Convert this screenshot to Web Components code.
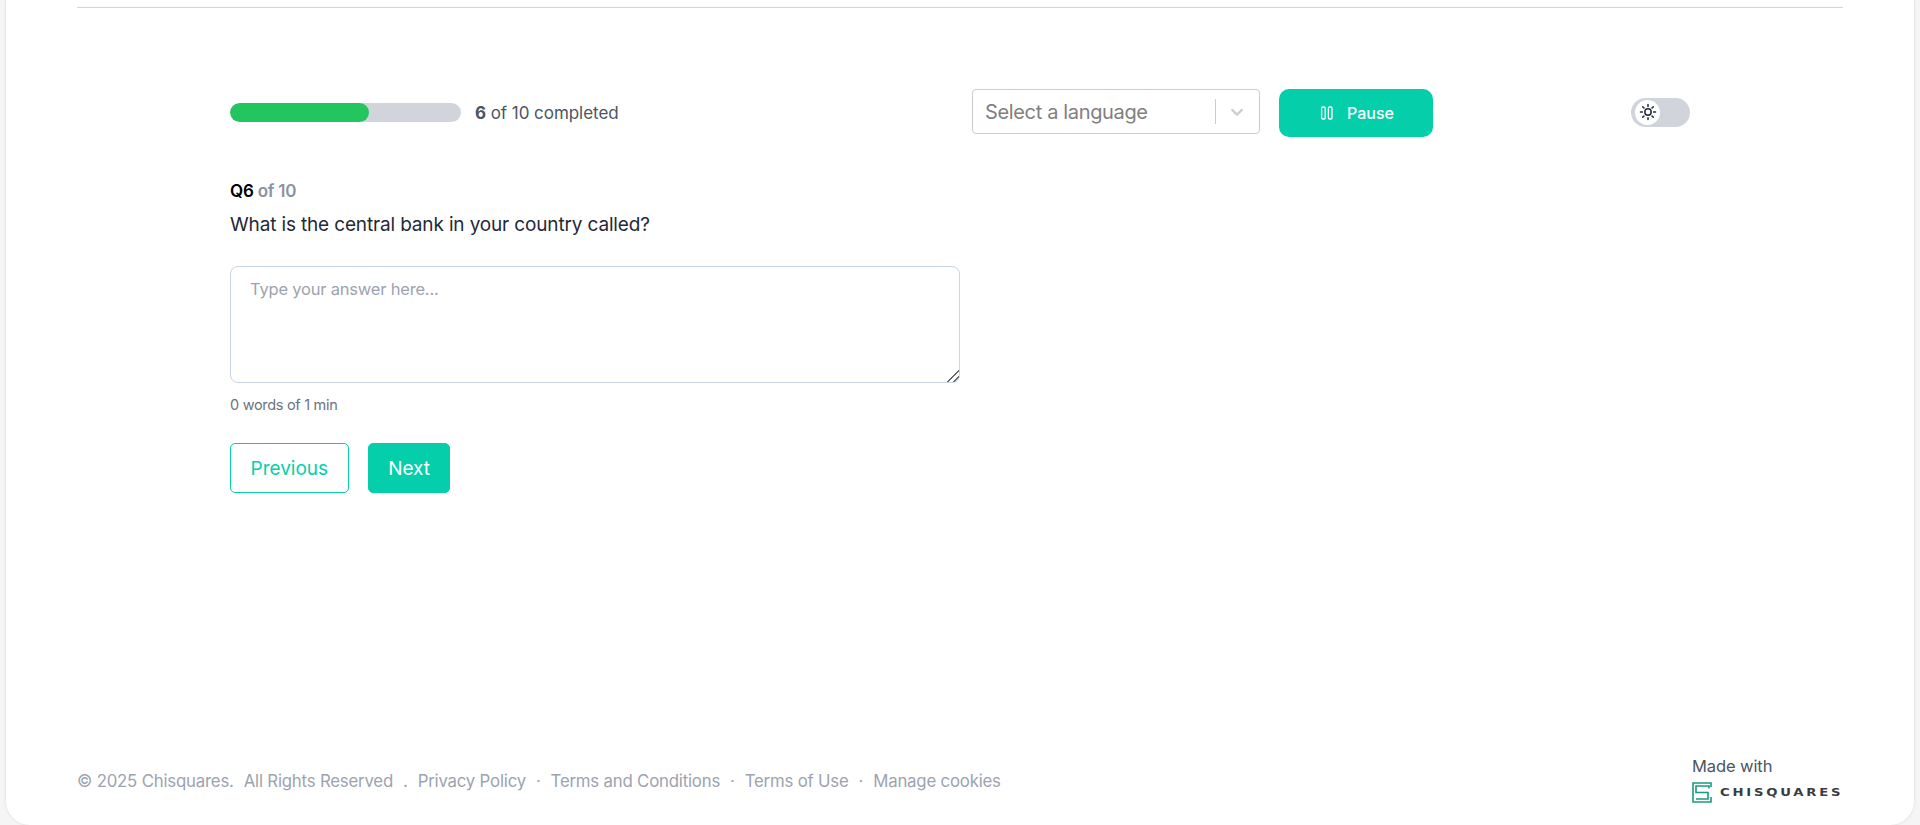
<!DOCTYPE html>
<html lang="en">
<head>
<meta charset="utf-8">
<title>Survey</title>
<style>
  html, body { margin: 0; height: 100%; overflow: hidden; }
  body { background: #f5f5f5; font-family: Inter, "Noto Sans", sans-serif; }
</style>
</head>
<body>
<survey-card>
  <survey-header>
    <survey-progress done="6" total="10"></survey-progress>
    <lang-select>Select a language</lang-select>
    <pause-button>Pause</pause-button>
    <theme-toggle></theme-toggle>
  </survey-header>
  <survey-question number="6" total="10">What is the central bank in your country called?</survey-question>
  <survey-nav>
    <nav-button kind="outline">Previous</nav-button>
    <nav-button>Next</nav-button>
  </survey-nav>
  <site-footer slot="footer"></site-footer>
</survey-card>

<script>
  // La tarjeta blanca de la pagina
  class SurveyCard extends HTMLElement {
    constructor() {
      super();
      this.attachShadow({ mode: 'open' });
      this.shadowRoot.innerHTML = `
        <style>
          :host {
            display: flex;
            flex-direction: column;
            box-sizing: border-box;
            height: 825px;
            margin: 0 6px 0 6px;
            padding: 7px 71px 0;
            background: #fff;
            border-radius: 0 0 24px 24px;
            box-shadow: 0 0 3px rgba(0,0,0,.12);
          }
          hr { width: 100%; margin: 0; border: 0; border-top: 1px solid #d1d5db; }
          main { flex: 1; padding: 81px 153px 0 153px; }
        </style>
        <hr>
        <main><slot></slot></main>
        <slot name="footer"></slot>
      `;
    }
  }

  class SurveyHeader extends HTMLElement {
    constructor() {
      super();
      this.attachShadow({ mode: 'open' });
      this.shadowRoot.innerHTML = `
        <style>
          :host { display: flex; align-items: center; gap: 19px; height: 48px; }
          ::slotted(theme-toggle) { margin-left: auto; margin-bottom: 2px; }
          ::slotted(survey-progress) { margin-bottom: 2px; }
          ::slotted(lang-select) { align-self: flex-start; }
        </style>
        <slot></slot>
      `;
    }
  }

  class SurveyProgress extends HTMLElement {
    constructor() {
      super();
      this.attachShadow({ mode: 'open' });
      const done = this.getAttribute('done');
      const total = this.getAttribute('total');
      this.shadowRoot.innerHTML = `
        <style>
          :host { display: flex; align-items: center; gap: 14px; width: 723px; font-size: 17px; letter-spacing: -.05px; color: #4b5563; }
          .track { width: 231px; height: 19px; border-radius: 10px; background: #d1d5db; overflow: hidden; }
          .fill { width: ${done / total * 100}%; height: 100%; border-radius: 10px; background: #22c55e; }
          span { margin-top: 2px; }
          b { font-weight: 700; }
        </style>
        <div class="track"><div class="fill"></div></div>
        <span><b>${done}</b> of ${total} completed</span>
      `;
    }
  }

  class LangSelect extends HTMLElement {
    constructor() {
      super();
      this.attachShadow({ mode: 'open' });
      this.shadowRoot.innerHTML = `
        <style>
          :host { display: flex; align-items: center; box-sizing: border-box; width: 288px; height: 45px; border: 1px solid #ccc; border-radius: 4px; padding-left: 12px; font-size: 20px; letter-spacing: -.35px; color: #808080; background: #fff; }
          .txt { flex: 1; }
          i { width: 1px; height: 25px; background: #ccc; }
          svg { margin: 0 12px 0 11px; display: block; }
        </style>
        <span class="txt"><slot></slot></span>
        <i></i>
        <svg width="20" height="20" viewBox="0 0 20 20"><path fill="#ccc" d="M4.5 7.2c.5-.5 1.2-.5 1.7 0L10 11l3.8-3.8c.5-.5 1.2-.5 1.7 0s.5 1.2 0 1.7l-4.7 4.6c-.4.5-1.2.5-1.6 0L4.5 8.9c-.5-.5-.5-1.2 0-1.7z"/></svg>
      `;
    }
  }

  class PauseButton extends HTMLElement {
    constructor() {
      super();
      this.attachShadow({ mode: 'open' });
      this.shadowRoot.innerHTML = `
        <style>
          :host { display: flex; align-items: center; justify-content: center; gap: 13px; box-sizing: border-box; width: 154px; height: 48px; padding-left: 2px; border-radius: 10px; background: #05cfab; color: #fff; font-size: 16px; font-weight: 500; }
          svg { display: block; }
        </style>
        <svg width="14" height="14" viewBox="0 0 14 14" fill="none" stroke="#fff" stroke-width="1.3"><rect x="1.6" y="1" width="3.6" height="12" rx="1.2"/><rect x="8.4" y="1" width="3.6" height="12" rx="1.2"/></svg>
        <span><slot></slot></span>
      `;
    }
  }

  class ThemeToggle extends HTMLElement {
    constructor() {
      super();
      this.attachShadow({ mode: 'open' });
      this.shadowRoot.innerHTML = `
        <style>
          :host { display: flex; align-items: center; box-sizing: border-box; width: 59px; height: 29px; padding-left: 4px; border-radius: 15px; background: #d1d5db; }
          .knob { display: flex; align-items: center; justify-content: center; width: 25px; height: 25px; border-radius: 50%; background: #fff; }
          svg { display: block; }
        </style>
        <div class="knob">
          <svg width="18" height="18" viewBox="0 0 24 24" fill="none" stroke="#1f2937" stroke-width="2" stroke-linecap="round"><circle cx="12" cy="12" r="4.2"/><path d="M12 2v2.5M12 19.5V22M2 12h2.5M19.5 12H22M4.9 4.9l1.8 1.8M17.3 17.3l1.8 1.8M4.9 19.1l1.8-1.8M17.3 6.7l1.8-1.8"/></svg>
        </div>
      `;
    }
  }

  class SurveyQuestion extends HTMLElement {
    constructor() {
      super();
      this.attachShadow({ mode: 'open' });
      const n = this.getAttribute('number');
      const total = this.getAttribute('total');
      this.shadowRoot.innerHTML = `
        <style>
          :host { display: block; padding-top: 42px; width: 730px; }
          .num { font-size: 17px; line-height: 24px; font-weight: 600; color: #000; letter-spacing: -.2px; }
          .num span { color: #8b93a1; }
          .text { margin-top: 8px; font-size: 19px; line-height: 27px; color: #1f2937; letter-spacing: -.15px; }
          textarea { display: block; box-sizing: border-box; width: 100%; height: 117px; margin-top: 28px; padding: 10px 19px; border: 1px solid #c8d5e2; border-radius: 8px; outline: 0; font: 16.5px/24px Inter, sans-serif; letter-spacing: -.2px; color: #1f2937; }
          textarea::placeholder { color: #9ca3af; opacity: 1; }
          textarea::-webkit-resizer { background: linear-gradient(135deg, transparent 58%, #666 58% 65%, transparent 65% 78%, #666 78% 85%, transparent 85%); }
          .count { margin-top: 12px; font-size: 14.5px; line-height: 20px; letter-spacing: -.3px; color: #6b7280; }
        </style>
        <div class="num">Q${n} <span>of ${total}</span></div>
        <div class="text"><slot></slot></div>
        <textarea placeholder="Type your answer here..."></textarea>
        <div class="count">0 words of 1 min</div>
      `;
    }
  }

  class SurveyNav extends HTMLElement {
    constructor() {
      super();
      this.attachShadow({ mode: 'open' });
      this.shadowRoot.innerHTML = `
        <style>
          :host { display: flex; gap: 19px; margin-top: 28px; }
        </style>
        <slot></slot>
      `;
    }
  }

  class NavButton extends HTMLElement {
    constructor() {
      super();
      this.attachShadow({ mode: 'open' });
      this.shadowRoot.innerHTML = `
        <style>
          :host { display: flex; align-items: center; box-sizing: border-box; height: 50px; padding: 1px 19px 0; border: 1px solid #05cfab; border-radius: 5px; background: #05cfab; color: #fff; font-size: 19px; }
          :host([kind="outline"]) { background: #fff; color: #05cfab; padding: 1px 20px 0 19.5px; }
        </style>
        <slot></slot>
      `;
    }
  }

  class SiteFooter extends HTMLElement {
    constructor() {
      super();
      this.attachShadow({ mode: 'open' });
      this.shadowRoot.innerHTML = `
        <style>
          :host { display: flex; justify-content: space-between; align-items: flex-end; padding-bottom: 22px; font-size: 16.8px; letter-spacing: -.2px; color: #9ca3af; }
          nav { display: flex; gap: 10px; line-height: 24px; padding-bottom: 10px; }
          made-with { margin-right: 1px; }
        </style>
        <nav>
          <span>© 2025 Chisquares.</span>
          <span>All Rights Reserved</span>
          <span>.</span>
          <span>Privacy Policy</span>
          <span>·</span>
          <span>Terms and Conditions</span>
          <span>·</span>
          <span>Terms of Use</span>
          <span>·</span>
          <span>Manage cookies</span>
        </nav>
        <made-with></made-with>
      `;
    }
  }

  class MadeWith extends HTMLElement {
    constructor() {
      super();
      this.attachShadow({ mode: 'open' });
      this.shadowRoot.innerHTML = `
        <style>
          :host { display: block; width: 150px; color: #4b5563; font-size: 16.5px; letter-spacing: -.1px; }
          .made { line-height: 24px; }
          .logo { display: flex; align-items: center; gap: 8px; margin-top: 4px; height: 21px; }
          svg { display: block; }
          .name { display: inline-block; font: 700 11px/1 "DejaVu Sans", sans-serif; letter-spacing: 2.3px; color: #3a3d3f; transform: scaleX(1.2); transform-origin: left center; }
        </style>
        <div class="made">Made with</div>
        <div class="logo">
          <svg width="20" height="21" viewBox="0 0 20 21" fill="none" stroke="#1a9c80" stroke-width="1.6">
            <path d="M19 5V1H1v19h18v-5"/>
            <path d="M17 6.5V4H4v6.5h12V17H4"/>
          </svg>
          <span class="name">CHISQUARES</span>
        </div>
      `;
    }
  }

  customElements.define('survey-card', SurveyCard);
  customElements.define('survey-header', SurveyHeader);
  customElements.define('survey-progress', SurveyProgress);
  customElements.define('lang-select', LangSelect);
  customElements.define('pause-button', PauseButton);
  customElements.define('theme-toggle', ThemeToggle);
  customElements.define('survey-question', SurveyQuestion);
  customElements.define('survey-nav', SurveyNav);
  customElements.define('nav-button', NavButton);
  customElements.define('made-with', MadeWith);
  customElements.define('site-footer', SiteFooter);
</script>
</body>
</html>
